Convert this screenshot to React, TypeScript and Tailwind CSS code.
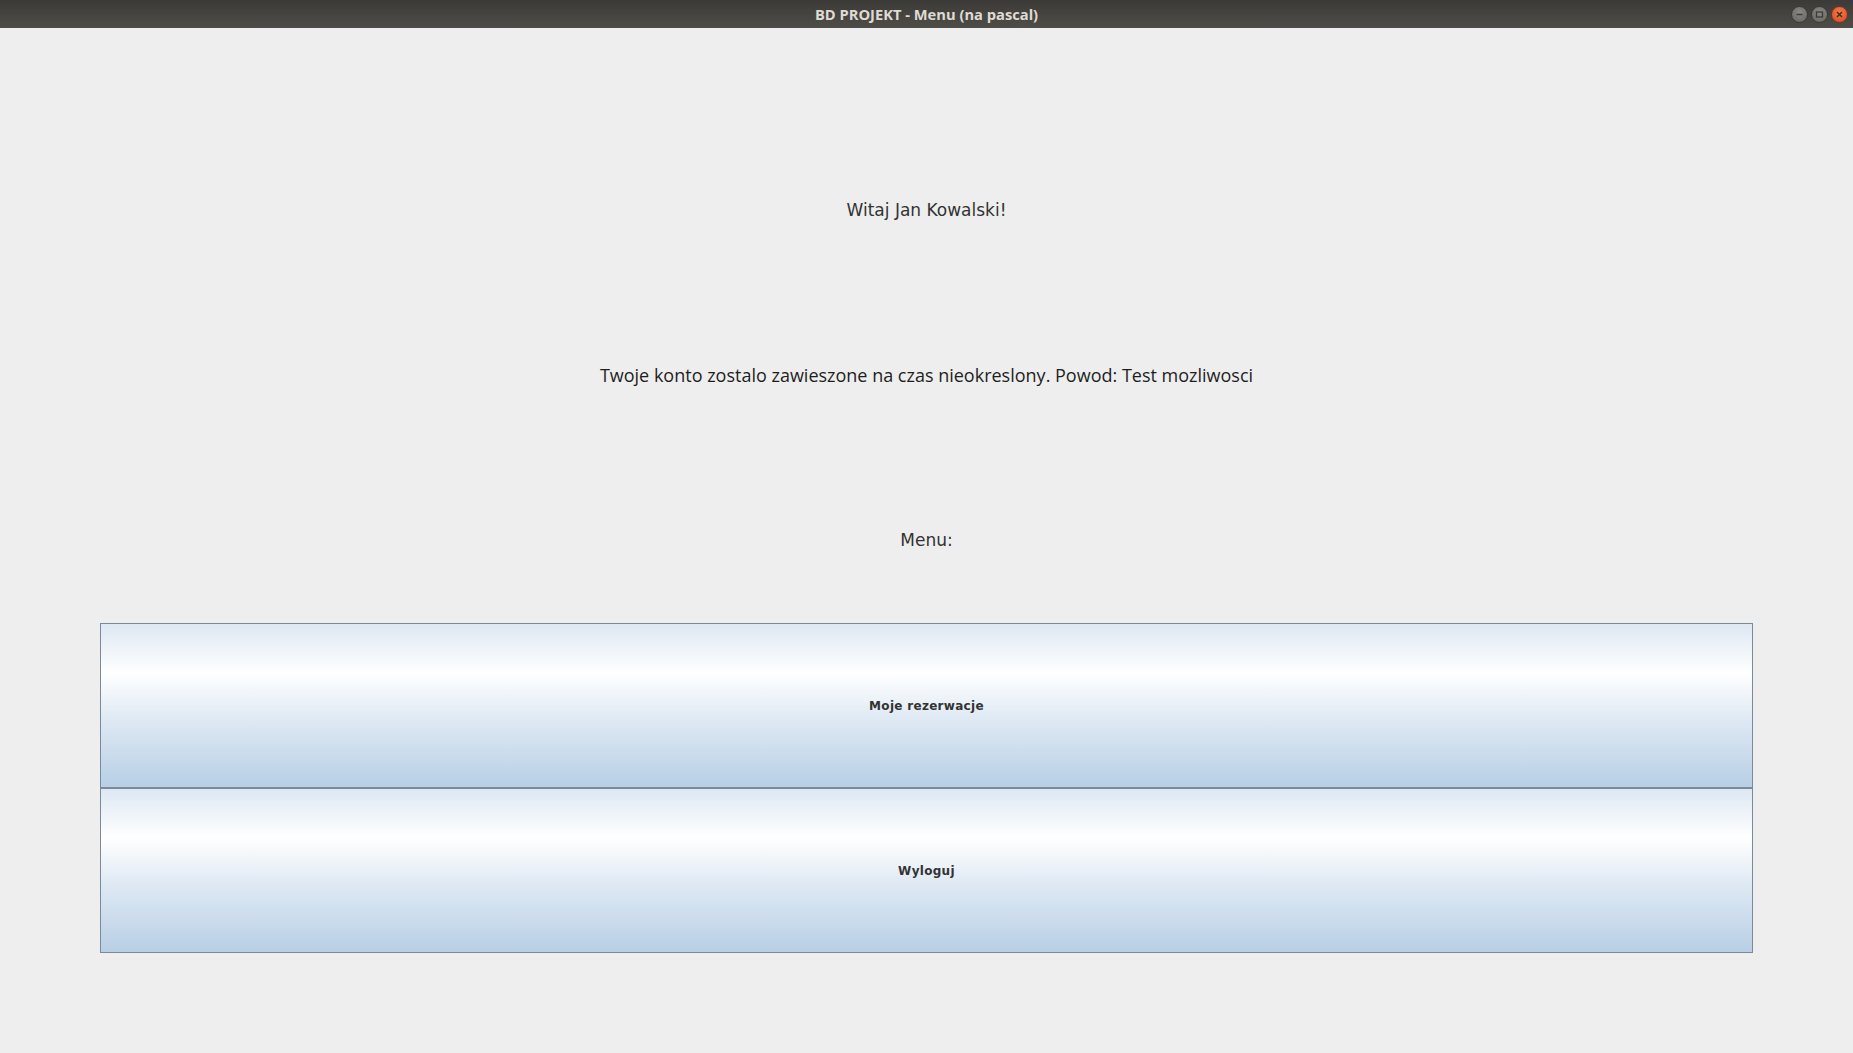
import React from "react";

const buttonGradient =
  "bg-[linear-gradient(to_bottom,#dde8f3_0%,#ffffff_30%,#dde8f3_60%,#b8cfe5_100%)]";

function WindowButton({ kind }: { kind: "min" | "max" | "close" }) {
  const close = kind === "close";
  return (
    <div
      className={
        close
          ? "flex h-[17px] w-[17px] items-center justify-center rounded-full border border-[#6e3a22] bg-[radial-gradient(circle_at_50%_35%,#f57a4a,#d9481c)]"
          : "flex h-[17px] w-[17px] items-center justify-center rounded-full border border-[#3a3935] bg-[radial-gradient(circle_at_50%_35%,#8a8883,#66645f)]"
      }
    >
      <svg width="9" height="9" viewBox="0 0 9 9">
        {kind === "min" && <line x1="1.5" y1="4.5" x2="7.5" y2="4.5" stroke="#3c3b37" strokeWidth="1.4" />}
        {kind === "max" && <rect x="1.5" y="2" width="6" height="5" fill="none" stroke="#3c3b37" strokeWidth="1.3" />}
        {close && (
          <path d="M2 2 L7 7 M7 2 L2 7" stroke="#3c2a20" strokeWidth="1.4" />
        )}
      </svg>
    </div>
  );
}

function MenuButton({ label }: { label: string }) {
  return (
    <button
      className={`flex h-full w-full items-center justify-center border border-[#7a8a99] ${buttonGradient} font-['DejaVu_Sans',sans-serif] text-[12px] font-bold tracking-[0.3px] text-[#333333]`}
    >
      {label}
    </button>
  );
}

export default function App() {
  return (
    <div className="flex h-[1053px] w-[1853px] flex-col bg-[#eeeeee]">
      {/* title bar */}
      <div className="relative flex h-[28px] shrink-0 items-center justify-center bg-[linear-gradient(to_bottom,#3b3a36,#4f4d48)]">
        <span className="font-['Open_Sans','Noto_Sans',sans-serif] text-[14.7px] font-bold text-[#dfdbd2]">
          BD PROJEKT - Menu (na pascal)
        </span>
        <div className="absolute right-[5px] top-[6px] flex gap-[3px]">
          <WindowButton kind="min" />
          <WindowButton kind="max" />
          <WindowButton kind="close" />
        </div>
      </div>

      {/* content */}
      <div className="grid flex-1 grid-rows-5 p-[100px] text-[#333333]">
        <div className="flex items-center justify-center font-['DejaVu_Sans',sans-serif] text-[17px]">
          Witaj Jan Kowalski!
        </div>
        <div className="flex items-center justify-center font-['Open_Sans',sans-serif] text-[18px] text-[#1e1e1e]">
          Twoje konto zostalo zawieszone na czas nieokreslony. Powod: Test mozliwosci
        </div>
        <div className="flex items-center justify-center font-['DejaVu_Sans',sans-serif] text-[17px]">
          Menu:
        </div>
        <MenuButton label="Moje rezerwacje" />
        <MenuButton label="Wyloguj" />
      </div>
    </div>
  );
}
